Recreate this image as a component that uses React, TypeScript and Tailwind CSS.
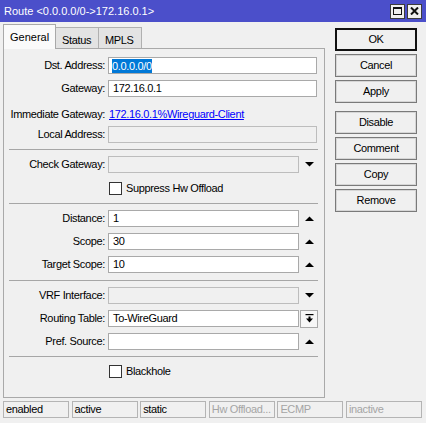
import React from 'react';

const font = "font-['Liberation_Sans',Arial,sans-serif]";

const DownTri = () => (
  <svg width="9" height="5" viewBox="0 0 9 5">
    <polygon points="0,0 9,0 4.5,4.5" fill="#000" />
  </svg>
);

const UpTri = () => (
  <svg width="9" height="5" viewBox="0 0 9 5">
    <polygon points="4.5,0.5 9,5 0,5" fill="#000" />
  </svg>
);

type FieldProps = {
  label: string;
  value?: string;
  disabled?: boolean;
  arrow?: 'up' | 'down' | 'box';
  selected?: boolean;
  className?: string;
};

const Field: React.FC<FieldProps> = ({ label, value, disabled, arrow, selected, className }) => (
  <div className={`flex items-center h-[17px] ${className ?? ''}`}>
    <div className="w-[101px] text-right pr-[0px] leading-[17px] whitespace-nowrap">{label}</div>
    <div
      className={`ml-[3px] h-[17px] border flex items-center pl-[3px] leading-[15px] whitespace-nowrap overflow-hidden ${
        arrow ? 'w-[191px]' : 'w-[209px]'
      } ${disabled ? 'bg-[#f0f0f0] border-[#bdbdbd]' : 'bg-white border-[#a9a9a9]'}`}
    >
      {selected ? (
        <span className="bg-[#0078d7] text-white h-[14px] leading-[14px] inline-block">{value}</span>
      ) : (
        <span className="pl-[1px]">{value}</span>
      )}
    </div>
    {arrow === 'down' && (
      <div className="w-[19px] h-[17px] flex items-center justify-center pl-[2px]">
        <DownTri />
      </div>
    )}
    {arrow === 'up' && (
      <div className="w-[19px] h-[17px] flex items-center justify-center pl-[2px] pb-[1px]">
        <UpTri />
      </div>
    )}
    {arrow === 'box' && (
      <div className="ml-[1px] w-[18px] h-[18px] border border-[#a9a9a9] bg-[#f7f7f7] flex items-center justify-center">
        <svg width="9" height="9" viewBox="0 0 9 9">
          <rect x="0.5" y="0" width="8" height="1.2" fill="#000" />
          <rect x="3.5" y="2.5" width="2" height="2.5" fill="#000" />
          <polygon points="1,4.5 8,4.5 4.5,8.5" fill="#000" />
        </svg>
      </div>
    )}
  </div>
);

const Sep: React.FC<{ className?: string }> = ({ className }) => (
  <div className={`ml-[5px] w-[309px] h-px bg-[#a6a6a6] ${className ?? ''}`} />
);

const Check: React.FC<{ label: string; className?: string }> = ({ label, className }) => (
  <div className={`flex items-center h-[13px] ml-[105px] ${className ?? ''}`}>
    <div className="w-[13px] h-[13px] border border-[#333] bg-white" />
    <span className="ml-[4px] leading-[13px]">{label}</span>
  </div>
);

const Btn: React.FC<{ label: string; primary?: boolean; className?: string }> = ({ label, primary, className }) => (
  <div
    className={`w-[82px] h-[23px] flex items-center justify-center bg-[#f0f0f0] ${
      primary ? 'border-2 border-[#111]' : 'border border-[#7a7a7a] shadow-[inset_0_0_0_1px_#d6d6d6]'
    } ${className ?? ''}`}
  >
    {label}
  </div>
);

const Cell: React.FC<{ label: string; dim?: boolean; grow?: boolean }> = ({ label, dim, grow }) => (
  <div
    className={`h-[17px] border border-[#b4b4b4] pl-[2px] leading-[15px] whitespace-nowrap overflow-hidden ${
      grow ? 'flex-1' : 'w-[66px]'
    } ${dim ? 'text-[#a5a5a5]' : 'text-black'}`}
  >
    {label}
  </div>
);

export default function App() {
  return (
    <div className={`w-[426px] h-[423px] bg-[#f0f0f0] flex flex-col text-[11px] tracking-[-0.35px] text-black ${font}`}>
      {/* Title bar */}
      <div className="h-[22px] bg-[#4b4fca] flex items-center justify-between pl-[4px] pr-[4px]">
        <span className="text-white tracking-normal leading-[22px]">Route &lt;0.0.0.0/0-&gt;172.16.0.1&gt;</span>
        <div className="flex gap-[2px]">
          <div className="w-[15px] h-[15px] bg-[#f0f0f0] border border-[#3c3c3c] flex items-center justify-center">
            <div className="w-[9px] h-[8px] border border-[#111] border-t-2" />
          </div>
          <div className="w-[15px] h-[15px] bg-[#f0f0f0] border border-[#3c3c3c] flex items-center justify-center">
            <svg width="9" height="8" viewBox="0 0 9 8">
              <path d="M1 0.5 L8 7.5 M8 0.5 L1 7.5" stroke="#111" strokeWidth="2" />
            </svg>
          </div>
        </div>
      </div>

      <div className="flex">
        {/* Left: tabs + panel */}
        <div className="ml-[3px] w-[322px] flex flex-col">
          <div className="h-[26px] flex items-end">
            <div className="relative z-10 -mb-px w-[53px] h-[25px] border border-b-0 border-[#a9a9a9] bg-[#fafafa] pl-[6px] pt-[4px] tracking-normal">
              General
            </div>
            <div className="w-[43px] h-[21px] border-t border-r border-[#b0b0b0] bg-[#e3e3e3] pl-[6px] pt-[4px]">
              Status
            </div>
            <div className="w-[43px] h-[21px] border-t border-r border-[#b0b0b0] bg-[#e3e3e3] pl-[6px] pt-[4px]">
              MPLS
            </div>
          </div>
          <div className="h-[350px] border border-[#a9a9a9] flex flex-col">
            <Field className="mt-[8px]" label="Dst. Address:" value="0.0.0.0/0" selected />
            <Field className="mt-[6px]" label="Gateway:" value="172.16.0.1" />
            <div className="mt-[9px] flex items-center h-[17px]">
              <div className="w-[101px] text-right leading-[17px] whitespace-nowrap">Immediate Gateway:</div>
              <span className="ml-[4px] text-[#0000ff] underline">172.16.0.1%Wireguard-Client</span>
            </div>
            <Field className="mt-[3px]" label="Local Address:" disabled />
            <Sep className="mt-[6px]" />
            <Field className="mt-[6px]" label="Check Gateway:" disabled arrow="down" />
            <Check className="mt-[9px]" label="Suppress Hw Offload" />
            <Sep className="mt-[8px]" />
            <Field className="mt-[6px]" label="Distance:" value="1" arrow="up" />
            <Field className="mt-[6px]" label="Scope:" value="30" arrow="up" />
            <Field className="mt-[6px]" label="Target Scope:" value="10" arrow="up" />
            <Sep className="mt-[7px]" />
            <Field className="mt-[6px]" label="VRF Interface:" disabled arrow="down" />
            <Field className="mt-[6px]" label="Routing Table:" value="To-WireGuard" arrow="box" />
            <Field className="mt-[6px]" label="Pref. Source:" arrow="up" />
            <Sep className="mt-[6px]" />
            <Check className="mt-[8px]" label="Blackhole" />
          </div>
        </div>

        {/* Right: buttons */}
        <div className="ml-[10px] pt-[6px] flex flex-col gap-[3px]">
          <Btn label="OK" primary />
          <Btn label="Cancel" />
          <Btn label="Apply" />
          <Btn label="Disable" className="mt-[5px]" />
          <Btn label="Comment" />
          <Btn label="Copy" />
          <Btn label="Remove" />
        </div>
      </div>

      {/* Status bar */}
      <div className="mt-[3px] ml-[3px] mr-[4px] flex gap-[2.6px]">
        <Cell label="enabled" />
        <Cell label="active" />
        <Cell label="static" />
        <Cell label="Hw Offload..." dim />
        <Cell label="ECMP" dim />
        <Cell label="inactive" dim grow />
      </div>
    </div>
  );
}
